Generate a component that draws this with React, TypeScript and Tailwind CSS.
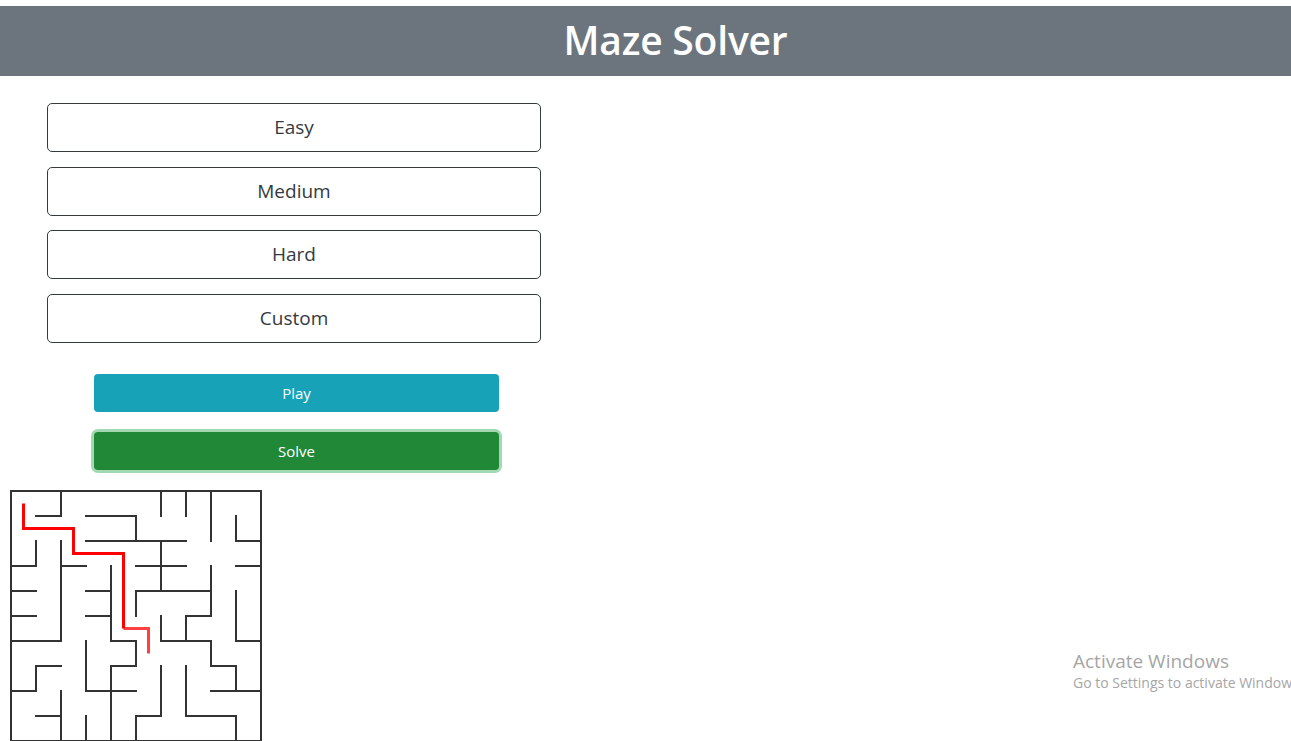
import React from "react";

const H: [number, number, number][] = [
  [1, 1, 2], [1, 3, 5], [2, 9, 10], [2, 3, 7], [3, 0, 1], [3, 2, 3], [3, 5, 7], [3, 9, 10],
  [4, 0, 1], [4, 3, 4], [4, 5, 8], [5, 0, 1], [5, 3, 4], [5, 7, 8], [6, 0, 2], [6, 4, 5],
  [6, 6, 8], [6, 9, 10], [7, 1, 2], [7, 4, 5], [7, 8, 9], [8, 0, 1], [8, 3, 5], [8, 8, 10],
  [9, 1, 2], [9, 5, 6], [9, 7, 9],
];
const V: [number, number, number][] = [
  [2, 0, 1], [5, 1, 2], [6, 0, 1], [7, 0, 1], [8, 0, 2], [9, 1, 2], [6, 2, 4], [1, 2, 3],
  [2, 2, 6], [4, 3, 6], [8, 3, 5], [5, 4, 5], [9, 4, 6], [6, 5, 6], [7, 5, 6], [5, 6, 7],
  [8, 6, 7], [3, 6, 8], [1, 7, 8], [4, 7, 10], [6, 7, 9], [7, 7, 9], [9, 7, 8], [2, 8, 10],
  [3, 9, 10], [5, 9, 10], [9, 9, 10],
];

const p = (n: number) => 1 + 25 * n;
const c = (n: number) => 13.5 + 25 * n;

function Maze() {
  const path1: [number, number][] = [[0, 0], [0, 1], [2, 1], [2, 2], [4, 2], [4, 5]];
  const path2: [number, number][] = [[4, 5], [5, 5], [5, 6]];
  const toPts = (a: [number, number][]) => a.map(([x, y]) => `${c(x)},${c(y)}`).join(" ");
  return (
    <svg width="252" height="252" viewBox="0 0 252 252" className="block">
      <g stroke="#333" strokeWidth="2" strokeLinecap="square">
        <rect x={1} y={1} width={250} height={250} fill="none" />
        {H.map(([j, a, b], k) => (
          <line key={"h" + k} x1={p(a)} y1={p(j)} x2={p(b)} y2={p(j)} />
        ))}
        {V.map(([i, a, b], k) => (
          <line key={"v" + k} x1={p(i)} y1={p(a)} x2={p(i)} y2={p(b)} />
        ))}
      </g>
      <polyline points={toPts(path1)} fill="none" stroke="#ff0000" strokeWidth="3" />
      <polyline points={toPts(path2)} fill="none" stroke="#ff0000" strokeOpacity="0.75" strokeWidth="3" />
    </svg>
  );
}

export default function App() {
  const levels = ["Easy", "Medium", "Hard", "Custom"];
  return (
    <div className="relative min-h-[741px] bg-white" style={{ fontFamily: '"Open Sans", "Noto Sans", sans-serif' }}>
      <div className="pt-[6px]">
        <div className="h-[70px] bg-[#6c757d] flex items-center justify-center pl-[60px] pb-[4px]">
          <h1 className="text-[39px] font-semibold text-white leading-none tracking-[-0.2px]">Maze Solver</h1>
        </div>
      </div>
      <div className="ml-[47px] w-[494px] mt-[27px] flex flex-col gap-[14.5px]">
        {levels.map((l) => (
          <button
            key={l}
            className="h-[49px] w-full border border-[#343a40] rounded-[5px] bg-white text-[#343a40] text-[19px] flex items-center justify-center"
          >
            {l}
          </button>
        ))}
      </div>
      <div className="ml-[94px] w-[405px] mt-[31.5px] flex flex-col gap-[20px]">
        <button className="h-[38px] w-full rounded-[4px] bg-[#17a2b8] text-white text-[15px] flex items-center justify-center">
          Play
        </button>
        <button className="h-[38px] w-full rounded-[4px] bg-[#218838] text-white text-[15px] flex items-center justify-center shadow-[0_0_0_3px_rgba(72,180,97,0.5)]">
          Solve
        </button>
      </div>
      <div className="ml-[10px] mt-[20px]">
        <Maze />
      </div>
      <div className="absolute left-[1073px] top-[649px] text-[#a6a6a6] whitespace-nowrap overflow-hidden w-[218px]">
        <div className="text-[19px] leading-[24px]">Activate Windows</div>
        <div className="text-[14px] leading-[20px]">Go to Settings to activate Windows.</div>
      </div>
    </div>
  );
}
